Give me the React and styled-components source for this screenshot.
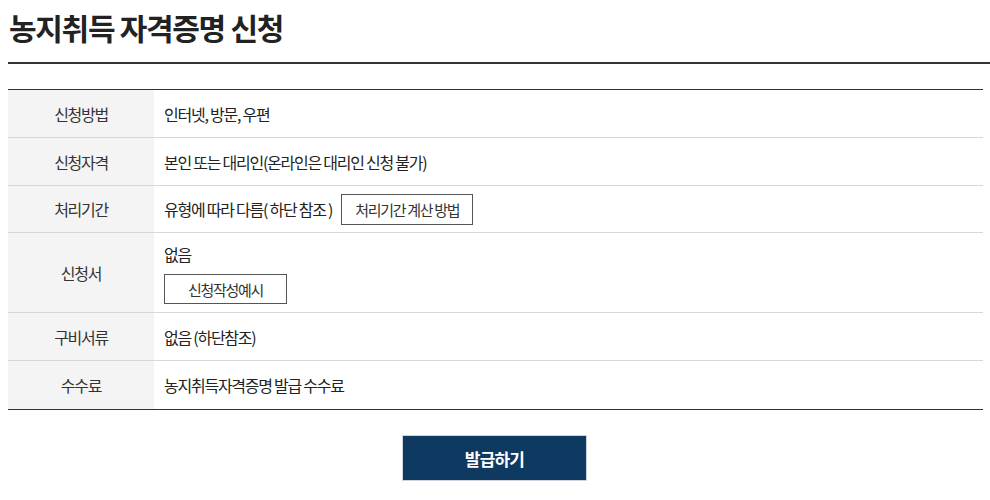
import React from "react";
import styled, { createGlobalStyle } from "styled-components";

const Global = createGlobalStyle`
  *, *::before, *::after { box-sizing: border-box; }
  html, body { margin: 0; padding: 0; background: #fff; }
  body {
    font-family: "Noto Sans CJK KR", "Noto Sans", sans-serif;
    color: #333;
    overflow: hidden;
  }
`;

const Page = styled.div`
  width: 990px;
  padding-left: 8px;
`;

const Title = styled.h2`
  margin: 0;
  padding: 7px 0 15px 1px;
  font-size: 30px;
  line-height: 40px;
  font-weight: 700;
  letter-spacing: -1.3px;
  color: #222;
  border-bottom: 2px solid #333;
`;

const Table = styled.div`
  margin: 25px 7px 0 0;
  display: grid;
  grid-template-columns: 146px 1fr;
  border-top: 1px solid #333;
  border-bottom: 1px solid #333;
`;

const Label = styled.div`
  background: #f4f4f4;
  display: flex;
  align-items: center;
  justify-content: center;
  height: ${(p) => p.$h}px;
  border-bottom: ${(p) => (p.$last ? "none" : "1px solid #d8d8d8")};
  font-size: 16px;
  letter-spacing: -1.3px;
  color: #333;
`;

const Cell = styled.div`
  display: flex;
  flex-direction: ${(p) => (p.$column ? "column" : "row")};
  align-items: ${(p) => (p.$column ? "flex-start" : "center")};
  gap: ${(p) => (p.$column ? "9px" : "0")};
  padding: ${(p) => (p.$column ? "10px 10px 8px" : "0 10px")};
  height: ${(p) => p.$h}px;
  border-bottom: ${(p) => (p.$last ? "none" : "1px solid #d8d8d8")};
  font-size: 16px;
  letter-spacing: -1.25px;
  line-height: 22px;
  color: #222;
`;

const OutlineButton = styled.button`
  font-family: inherit;
  height: 31px;
  padding: 0 ${(p) => p.$px}px;
  margin-left: ${(p) => p.$ml || 0}px;
  background: #fff;
  border: 1px solid #555;
  font-size: 15px;
  letter-spacing: -1.3px;
  color: #333;
  cursor: pointer;
`;

const Actions = styled.div`
  display: flex;
  justify-content: center;
  margin: 25px 7px 0 0;
`;

const IssueButton = styled.button`
  font-family: inherit;
  width: 185px;
  height: 46px;
  background: #0e3a62;
  border: 1px solid #cfd4da;
  color: #fff;
  font-size: 17px;
  font-weight: 700;
  letter-spacing: -0.8px;
  cursor: pointer;
  margin-right: 2px;
`;

const rows = [
  { label: "신청방법", h: 48, content: "인터넷, 방문, 우편" },
  { label: "신청자격", h: 48, content: "본인 또는 대리인(온라인은 대리인 신청 불가)" },
  {
    label: "처리기간",
    h: 47,
    content: (
      <>
        유형에 따라 다름( 하단 참조 )
        <OutlineButton $px={13} $ml={9}>처리기간 계산 방법</OutlineButton>
      </>
    ),
  },
  {
    label: "신청서",
    h: 80,
    column: true,
    content: (
      <>
        <span>없음</span>
        <OutlineButton $px={23}>신청작성예시</OutlineButton>
      </>
    ),
  },
  { label: "구비서류", h: 48, content: "없음 (하단참조)" },
  { label: "수수료", h: 48, content: "농지취득자격증명 발급 수수료", last: true },
];

export default function App() {
  return (
    <Page>
      <Global />
      <Title>농지취득 자격증명 신청</Title>
      <Table>
        {rows.map((r) => (
          <React.Fragment key={r.label}>
            <Label $h={r.h} $last={r.last}>{r.label}</Label>
            <Cell $h={r.h} $last={r.last} $column={r.column}>
              {r.content}
            </Cell>
          </React.Fragment>
        ))}
      </Table>
      <Actions>
        <IssueButton>발급하기</IssueButton>
      </Actions>
    </Page>
  );
}
